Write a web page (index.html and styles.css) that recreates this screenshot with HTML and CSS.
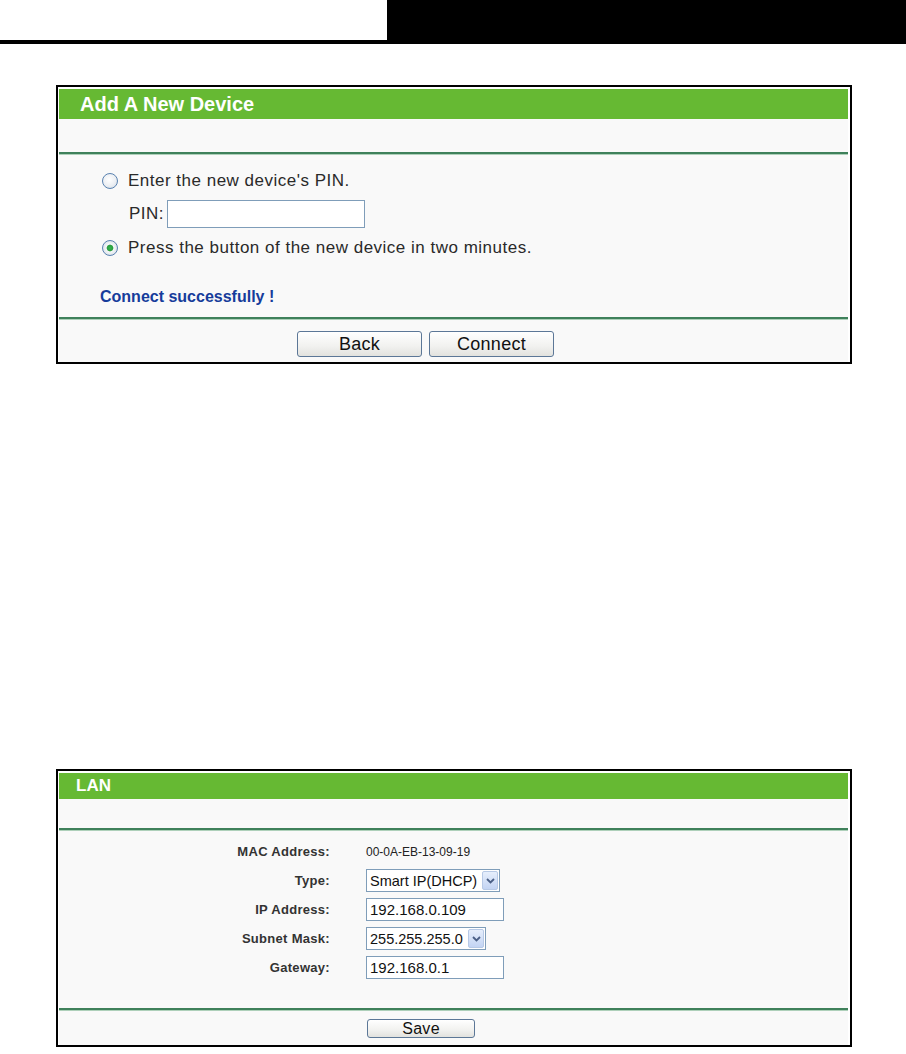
FILE: index.html
```html
<!DOCTYPE html>
<html lang="en">
<head>
  <meta charset="UTF-8">
  <title>Router Settings</title>
  <link rel="stylesheet" href="styles.css">
</head>
<body>
  <!-- Page header bar -->
  <div class="topbar">
    <div class="topbar-left"></div>
    <div class="topbar-right"></div>
  </div>

  <!-- Add A New Device -->
  <div class="panel panel-device">
    <div class="panel-head big">Add A New Device</div>
    <div class="panel-gap"></div>
    <div class="rule"></div>
    <div class="device-body">
      <label class="radio-row first">
        <input type="radio" name="mode">
        <span>Enter the new device's PIN.</span>
      </label>
      <div class="pin-row">
        <span>PIN:</span>
        <input type="text" class="pin-input">
      </div>
      <label class="radio-row second">
        <input type="radio" name="mode" checked>
        <span>Press the button of the new device in two minutes.</span>
      </label>
      <div class="status">Connect successfully !</div>
    </div>
    <div class="rule"></div>
    <div class="actions device-actions">
      <button class="btn">Back</button>
      <button class="btn">Connect</button>
    </div>
  </div>

  <!-- LAN -->
  <div class="panel panel-lan">
    <div class="panel-head">LAN</div>
    <div class="panel-gap small"></div>
    <div class="rule"></div>
    <div class="lan-body">
      <div class="lan-label">MAC Address:</div>
      <div class="lan-value mac">00-0A-EB-13-09-19</div>

      <div class="lan-label">Type:</div>
      <div class="lan-value">
        <span class="select-wrap">
          <select class="sel-type">
            <option>Smart IP(DHCP)</option>
          </select>
          <span class="arrow"><svg width="9" height="6" viewBox="0 0 9 6"><path d="M1 1 L4.5 4.5 L8 1" fill="none" stroke="#4a5f86" stroke-width="1.8"/></svg></span>
        </span>
      </div>

      <div class="lan-label">IP Address:</div>
      <div class="lan-value"><input type="text" class="lan-input" value="192.168.0.109"></div>

      <div class="lan-label">Subnet Mask:</div>
      <div class="lan-value">
        <span class="select-wrap">
          <select class="sel-mask">
            <option>255.255.255.0</option>
          </select>
          <span class="arrow"><svg width="9" height="6" viewBox="0 0 9 6"><path d="M1 1 L4.5 4.5 L8 1" fill="none" stroke="#4a5f86" stroke-width="1.8"/></svg></span>
        </span>
      </div>

      <div class="lan-label">Gateway:</div>
      <div class="lan-value"><input type="text" class="lan-input" value="192.168.0.1"></div>
    </div>
    <div class="rule"></div>
    <div class="actions lan-actions">
      <button class="btn btn-small">Save</button>
    </div>
  </div>
</body>
</html>
```

FILE: styles.css
```css
/* General Styles */
body {
  margin: 0;
  padding: 0;
  background: #fff;
  font-family: "Liberation Sans", Arial, sans-serif;
  color: #222;
}

/* Header bar */
.topbar {
  display: flex;
  height: 44px;
}

.topbar-left {
  width: 387px;
  height: 40px;
  background: #fff;
  border-bottom: 4px solid #000;
}

.topbar-right {
  flex: 1;
  background: #000;
}

/* Panels */
.panel {
  width: 789px;
  margin-left: 56px;
  border: 2px solid #000;
  padding: 2px 2px 0 1px;
  background: #fff;
}

.panel > div {
  background: #f9f9f9;
}

.panel-device {
  margin-top: 41px;
}

.panel-lan {
  margin-top: 405px;
}

.panel-head {
  background: #66b933 !important;
  color: #fff;
  font-weight: bold;
  font-size: 17px;
  height: 26px;
  line-height: 26px;
  padding-left: 17px;
}

.panel-head.big {
  font-size: 20px;
  height: 30px;
  line-height: 30px;
  padding-left: 21px;
}

.panel-gap {
  height: 33px;
}

.panel-gap.small {
  height: 29px;
}

.rule {
  height: 2px;
  background: #3f815b !important;
  border-bottom: 1px solid #aed0ba;
}

/* Device form */
.device-body {
  height: 162px;
  padding-left: 41px;
  font-size: 17px;
  letter-spacing: 0.5px;
  color: #2a2a2a;
}

.radio-row {
  display: flex;
  align-items: center;
  height: 28px;
  padding-left: 2px;
}

.radio-row.first {
  padding-top: 12px;
}

.radio-row.second {
  margin-top: 6px;
}

.radio-row span {
  margin-left: 10px;
}

input[type="radio"] {
  -webkit-appearance: none;
  appearance: none;
  width: 16px;
  height: 16px;
  margin: 0;
  border: 1px solid #5a82b0;
  border-radius: 50%;
  background: radial-gradient(circle at 45% 40%, #fff 0, #eceff3 55%, #cdd6e1 100%);
}

input[type="radio"]:checked {
  background: radial-gradient(circle, #35b84e 0, #2a9d3f 2.8px, #f5f7f9 3.8px, #e3e8ee 65%, #cdd6e1 100%);
}

.pin-row {
  display: flex;
  align-items: center;
  height: 28px;
  margin-top: 5px;
  padding-left: 29px;
}

.pin-input {
  width: 198px;
  height: 28px;
  box-sizing: border-box;
  margin-left: 3px;
  border: 1px solid #7f9db9;
  background: #fff;
}

.status {
  margin-top: 25px;
  height: 20px;
  line-height: 20px;
  font-size: 16px;
  font-weight: bold;
  letter-spacing: 0;
  color: #163c9b;
}

/* Buttons */
.actions {
  display: flex;
  gap: 7px;
}

.device-actions {
  padding: 11px 0 5px 238px;
}

.lan-actions {
  padding: 8px 0 7px 308px;
}

.btn {
  width: 125px;
  height: 26px;
  padding: 0;
  border: 1px solid #5c7797;
  border-radius: 3px;
  background: linear-gradient(#ffffff, #f1f1ef 60%, #e2e2de);
  font-family: "Liberation Sans", Arial, sans-serif;
  font-size: 18px;
  letter-spacing: 0.3px;
  color: #111;
}

.btn-small {
  width: 108px;
  height: 19px;
  font-size: 16px;
  line-height: 17px;
}

/* LAN form */
.lan-body {
  display: grid;
  grid-template-columns: 271px 1fr;
  grid-auto-rows: 29px;
  column-gap: 36px;
  align-items: center;
  padding: 6px 0 26px;
}

.lan-label {
  text-align: right;
  font-size: 13px;
  font-weight: bold;
  letter-spacing: 0.3px;
  color: #333;
}

.lan-value {
  font-size: 13px;
  color: #222;
}

.lan-value.mac {
  font-size: 12px;
}

.lan-input {
  width: 138px;
  height: 23px;
  box-sizing: border-box;
  padding: 0 3px;
  border: 1px solid #7f9db9;
  background: #fff;
  font-family: "Liberation Sans", Arial, sans-serif;
  font-size: 15px;
  color: #111;
}

.select-wrap {
  position: relative;
  display: inline-block;
  vertical-align: middle;
}

select {
  -webkit-appearance: none;
  appearance: none;
  display: block;
  height: 23px;
  padding: 0 18px 0 3px;
  border: 1px solid #7f9db9;
  border-radius: 0;
  background: #fff;
  font-family: "Liberation Sans", Arial, sans-serif;
  font-size: 14.5px;
  color: #111;
}

.sel-type {
  width: 134px;
}

.sel-mask {
  width: 120px;
}

.select-wrap .arrow {
  position: absolute;
  top: 2px;
  right: 2px;
  width: 14px;
  height: 17px;
  border: 1px solid #b7c9e6;
  border-radius: 2px;
  background: linear-gradient(#e6eefc, #c3d4f3);
  display: flex;
  align-items: center;
  justify-content: center;
  pointer-events: none;
}
```
